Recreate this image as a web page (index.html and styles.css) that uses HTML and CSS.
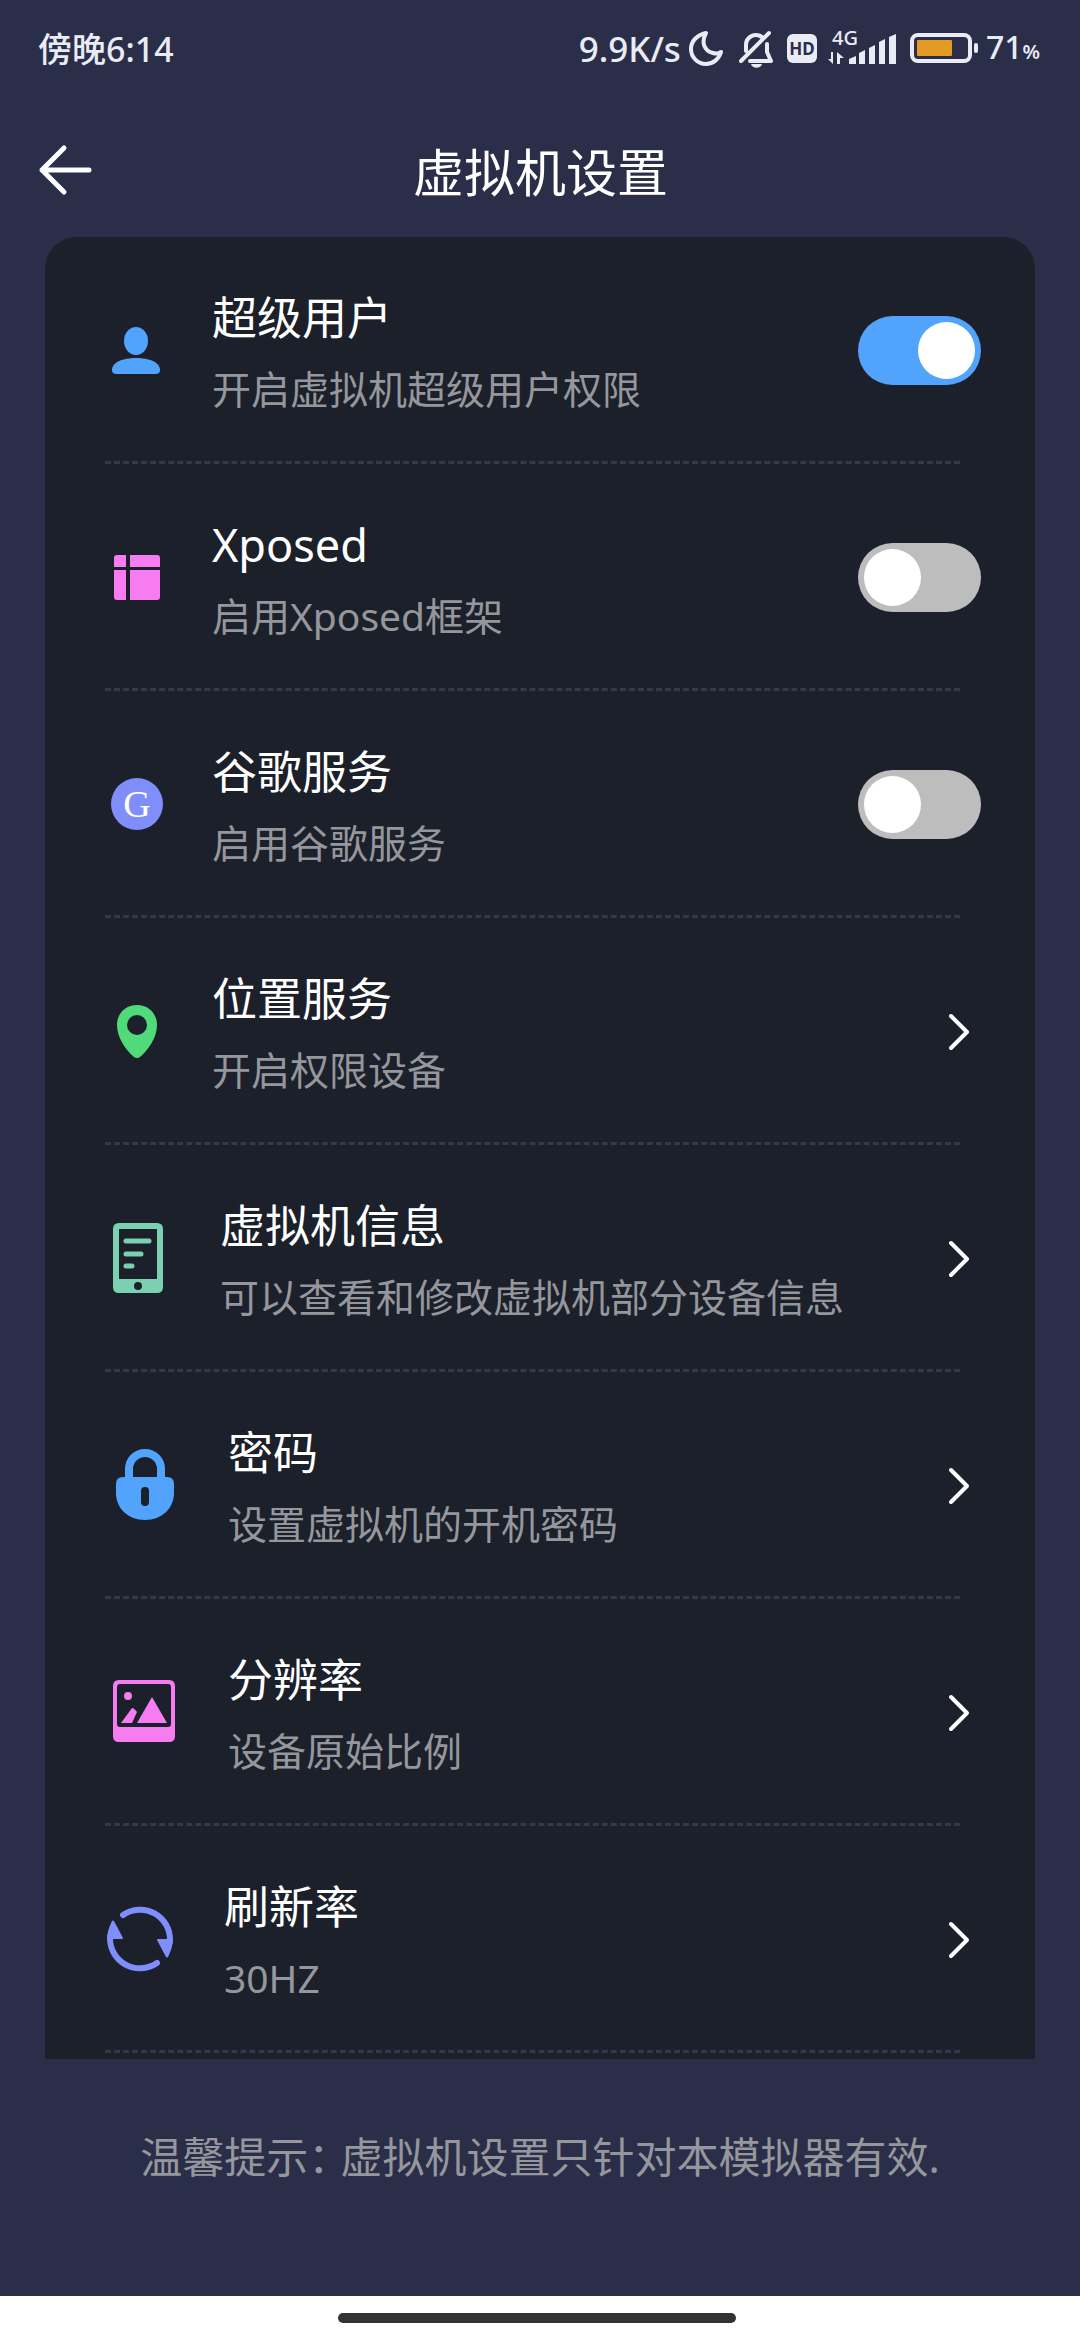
FILE: index.html
```html
<!DOCTYPE html>
<html lang="zh-CN">
<head>
<meta charset="utf-8">
<meta name="viewport" content="width=device-width">
<title>虚拟机设置</title>
<link rel="stylesheet" href="styles.css">
</head>
<body>
<div class="status-bar">
  <span class="status-time">傍晚6:14</span>
  <div class="status-icons">
    <span>9.9K/s</span>
    <svg width="34" height="40" viewBox="0 0 34 40" fill="none" stroke="currentColor" stroke-width="4" stroke-linejoin="round" aria-hidden="true">
      <path d="M17 4C8 6 2 12 2 20a15 15 0 0 0 15 15c7 0 13-5 15-12-3 2-5 2-8 1C15 22 12 13 17 4Z"/>
    </svg>
    <svg width="48" height="40" viewBox="0 0 48 40" fill="none" stroke="currentColor" stroke-width="4" stroke-linecap="round" stroke-linejoin="round" aria-hidden="true">
      <path d="M10 32 38 4M15 22v-6c0-8 9-13 16-8M36 15v8l4 9H19"/>
      <path d="M20 35h11c-1 5-10 5-11 0Z" fill="currentColor" stroke="none"/>
    </svg>
    <svg width="30" height="40" viewBox="0 0 30 40" aria-hidden="true">
      <rect y="5" width="30" height="29" rx="6" fill="currentColor"/>
      <text class="hd-text" x="15" y="26" text-anchor="middle">HD</text>
    </svg>
    <svg class="signal" width="75" height="40" viewBox="0 0 75 40" fill="currentColor" aria-hidden="true">
      <text class="net-text" x="7" y="16">4G</text>
      <path d="M8 23v12L3 30h3v-7ZM12 35V23l7 6h-4v6Z"/>
      <path d="M24 30l7-3v8h-7ZM34 24l6-3v14h-6ZM44 19l6-3v19h-6ZM54 13l6-3v25h-6ZM64 8l7-3v30h-7Z"/>
    </svg>
    <svg width="70" height="40" viewBox="0 0 70 40" aria-hidden="true">
      <rect x="4" y="6" width="58" height="26" rx="6" fill="none" stroke="currentColor" stroke-width="4"/>
      <rect x="9" y="11" width="35" height="16" rx="1" fill="#e39b25"/>
      <rect x="66" y="14" width="4" height="10" rx="2" fill="currentColor"/>
    </svg>
    <span class="battery-level">71<small class="percent">%</small></span>
  </div>
</div>

<header class="header">
  <button class="back" type="button" aria-label="返回">
    <svg width="60" height="60" viewBox="0 0 60 60" fill="none" stroke="currentColor" stroke-width="5" stroke-linecap="round" stroke-linejoin="round">
      <path d="M52 30H5M27 8 5 30l22 22"/>
    </svg>
  </button>
  <h1 class="title">虚拟机设置</h1>
</header>

<main class="main">
  <ul class="card">
    <li class="item">
      <label class="row" for="root">
        <svg width="64" height="81" viewBox="0 0 64 81" fill="#51a3fb" aria-hidden="true">
          <ellipse cx="31" cy="31" rx="12" ry="14"/>
          <path d="M7 60C7 52 18 48 31 48s24 4 24 12c0 3-2 4-5 4H12c-3 0-5-1-5-4Z"/>
        </svg>
        <span class="text"><span class="name">超级用户</span><span class="desc">开启虚拟机超级用户权限</span></span>
        <input class="switch" id="root" type="checkbox" checked>
      </label>
    </li>
    <li class="item">
      <label class="row" for="xposed">
        <svg width="64" height="81" viewBox="0 0 64 81" fill="#f77cf1" aria-hidden="true">
          <path d="M12 18h9v12H9v-9q0-3 3-3ZM25 18h27q3 0 3 3v9H25ZM9 33h12v30h-9q-3 0-3-3ZM25 33h30v27q0 3-3 3H25Z"/>
        </svg>
        <span class="text"><span class="name">Xposed</span><span class="desc">启用Xposed框架</span></span>
        <input class="switch" id="xposed" type="checkbox">
      </label>
    </li>
    <li class="item">
      <label class="row" for="google">
        <svg width="64" height="81" viewBox="0 0 64 81" aria-hidden="true">
          <circle cx="32" cy="40" r="26" fill="#7f8efb"/>
          <text class="g-text" x="32" y="53" text-anchor="middle">G</text>
        </svg>
        <span class="text"><span class="name">谷歌服务</span><span class="desc">启用谷歌服务</span></span>
        <input class="switch" id="google" type="checkbox">
      </label>
    </li>
    <li class="item">
      <a class="row" href="#location">
        <svg width="64" height="81" viewBox="0 0 64 81" aria-hidden="true">
          <path fill="#51da7a" fill-rule="evenodd" d="M32 14c12 0 20 9 20 20 0 13-9 25-17 32q-3 2-6 0C21 59 12 47 12 34c0-11 8-20 20-20Zm0 10a10 10 0 1 0 0 20 10 10 0 0 0 0-20Z"/>
        </svg>
        <span class="text"><span class="name">位置服务</span><span class="desc">开启权限设备</span></span>
        <svg class="chevron" width="28" height="44" viewBox="0 0 28 44" aria-hidden="true"><path d="M6 6l16 16L6 38"/></svg>
      </a>
    </li>
    <li class="item">
      <a class="row" href="#info">
        <svg width="72" height="81" viewBox="0 0 72 81" aria-hidden="true">
          <path fill="#7bd0b0" fill-rule="evenodd" d="M14 5h38q6 0 6 6v58q0 6-6 6H14q-6 0-6-6V11q0-6 6-6Zm0 6v50h38V11Zm19 53a4 4 0 1 0 0 8 4 4 0 0 0 0-8Z"/>
          <path d="M21 23h23M21 36h15M21 48h6" fill="none" stroke="#7bd0b0" stroke-width="5" stroke-linecap="round"/>
        </svg>
        <span class="text"><span class="name">虚拟机信息</span><span class="desc">可以查看和修改虚拟机部分设备信息</span></span>
        <svg class="chevron" width="28" height="44" viewBox="0 0 28 44" aria-hidden="true"><path d="M6 6l16 16L6 38"/></svg>
      </a>
    </li>
    <li class="item">
      <a class="row" href="#password">
        <svg width="80" height="81" viewBox="0 0 80 81" aria-hidden="true">
          <path d="M24 36V24a16 16 0 0 1 32 0v12" fill="none" stroke="#51a3fb" stroke-width="8"/>
          <path fill="#51a3fb" fill-rule="evenodd" d="M18 32h44q7 0 7 7v9c0 15-12 27-29 27S11 63 11 48v-9q0-7 7-7Zm22 10q-4 0-4 4v11q0 4 4 4t4-4V46q0-4-4-4Z"/>
        </svg>
        <span class="text"><span class="name">密码</span><span class="desc">设置虚拟机的开机密码</span></span>
        <svg class="chevron" width="28" height="44" viewBox="0 0 28 44" aria-hidden="true"><path d="M6 6l16 16L6 38"/></svg>
      </a>
    </li>
    <li class="item">
      <a class="row" href="#resolution">
        <svg width="80" height="81" viewBox="0 0 80 81" fill="#f77cf1" aria-hidden="true">
          <path fill-rule="evenodd" d="M14 8h50q6 0 6 6v50q0 6-6 6H14q-6 0-6-6V14q0-6 6-6Zm1 4q-3 0-3 3v37q0 3 3 3h48q3 0 3-3V15q0-3-3-3Z"/>
          <circle cx="23" cy="24" r="4"/>
          <path d="M47 25 62 51H32ZM27 36q2 0 5 4l-5 11H16Z"/>
        </svg>
        <span class="text"><span class="name">分辨率</span><span class="desc">设备原始比例</span></span>
        <svg class="chevron" width="28" height="44" viewBox="0 0 28 44" aria-hidden="true"><path d="M6 6l16 16L6 38"/></svg>
      </a>
    </li>
    <li class="item">
      <a class="row" href="#refresh">
        <svg width="76" height="81" viewBox="0 0 76 81" fill="#7f8efb" aria-hidden="true">
          <path d="M18 16A30 30 0 0 1 65 42M52 64A30 30 0 0 1 5 38" fill="none" stroke="#7f8efb" stroke-width="6" stroke-linecap="round"/>
          <path d="M52 41q0-1 1-1h15q0 8-5 18-1 1-2 0ZM18 39q0 1-1 1H2q0-8 5-18 1-1 2 0Z"/>
        </svg>
        <span class="text"><span class="name">刷新率</span><span class="desc">30HZ</span></span>
        <svg class="chevron" width="28" height="44" viewBox="0 0 28 44" aria-hidden="true"><path d="M6 6l16 16L6 38"/></svg>
      </a>
    </li>
  </ul>
  <p class="tip"><span class="tip-label">温馨提示：</span>虚拟机设置只针对本模拟器有效.</p>
</main>

<div class="nav-bar"><div class="nav-handle"></div></div>
</body>
</html>
```
FILE: styles.css
```css
* {
  box-sizing: border-box;
}

body {
  display: flex;
  flex-direction: column;
  min-height: 100vh;
  margin: 0;
  background: #2b2e48;
  color: #fff;
  font-family: "Noto Sans", "Noto Sans CJK SC", sans-serif;
}

svg {
  display: block;
  flex: none;
}

.status-bar {
  display: flex;
  align-items: center;
  justify-content: space-between;
  height: 98px;
  padding: 0 40px 0 38px;
  color: #e9ebf5;
  font-size: 35px;
  font-weight: 500;
  line-height: 48px;
}

.status-time {
  font-size: 34px;
}

.status-icons {
  display: flex;
  align-items: center;
  gap: 8px;
}

.battery-level {
  font-size: 32px;
}

.percent {
  font-size: 20px;
  font-weight: 600;
}

.signal {
  overflow: visible;
}

.hd-text {
  fill: #2b2e48;
  font-size: 17px;
  font-weight: 700;
}

.net-text {
  font-size: 20px;
}

.g-text {
  fill: #fff;
  font-family: "Liberation Serif", serif;
  font-size: 38px;
}

.header {
  display: grid;
  grid-template-columns: 60px 1fr 60px;
  align-items: center;
  height: 139px;
  padding: 5px 36px 0 37px;
}

.back {
  padding: 0;
  border: 0;
  background: none;
  color: #fff;
}

.title {
  margin: 0;
  padding-top: 3px;
  font-size: 51px;
  font-weight: 400;
  line-height: 72px;
  text-align: center;
}

.main {
  flex: 1;
  padding: 0 45px;
}

.card {
  margin: 0;
  padding: 0 0 6px;
  border-radius: 32px 32px 0 0;
  background: #1b202a;
  list-style: none;
}

.item {
  padding-top: 3px;
}

.item::after {
  content: "";
  display: block;
  margin: 0 75px 0 60px;
  border-top: 3px dashed #343849;
}

.row {
  display: flex;
  align-items: center;
  gap: 43px;
  height: 221px;
  padding: 0 54px 0 60px;
  color: #fff;
  text-decoration: none;
}

.text {
  display: flex;
  flex: 1;
  flex-direction: column;
  padding-top: 5px;
}

.name {
  font-size: 45px;
  line-height: 72px;
}

.desc {
  color: #95979c;
  font-size: 39px;
  line-height: 70px;
}

.switch {
  flex: none;
  width: 123px;
  height: 69px;
  margin: 0;
  padding: 6px;
  border-radius: 35px;
  background: #bdbdbd;
  appearance: none;
}

.switch::before {
  content: "";
  display: block;
  width: 57px;
  height: 57px;
  border-radius: 50%;
  background: #fff;
}

.switch:checked {
  background: #51a3fb;
}

.switch:checked::before {
  margin-left: auto;
}

.chevron {
  margin-right: 8px;
  fill: none;
  stroke: #fff;
  stroke-width: 4;
  stroke-linecap: round;
  stroke-linejoin: round;
}

.tip {
  margin: 0;
  padding: 68px 0 64px;
  color: #95979c;
  font-size: 42px;
  line-height: 60px;
  text-align: center;
}

.tip-label {
  margin-right: -10px;
}

.nav-bar {
  display: flex;
  justify-content: center;
  padding: 17px 6px 17px 0;
  background: #fff;
}

.nav-handle {
  width: 37%;
  height: 10px;
  border-radius: 5px;
  background: #333;
}
```
